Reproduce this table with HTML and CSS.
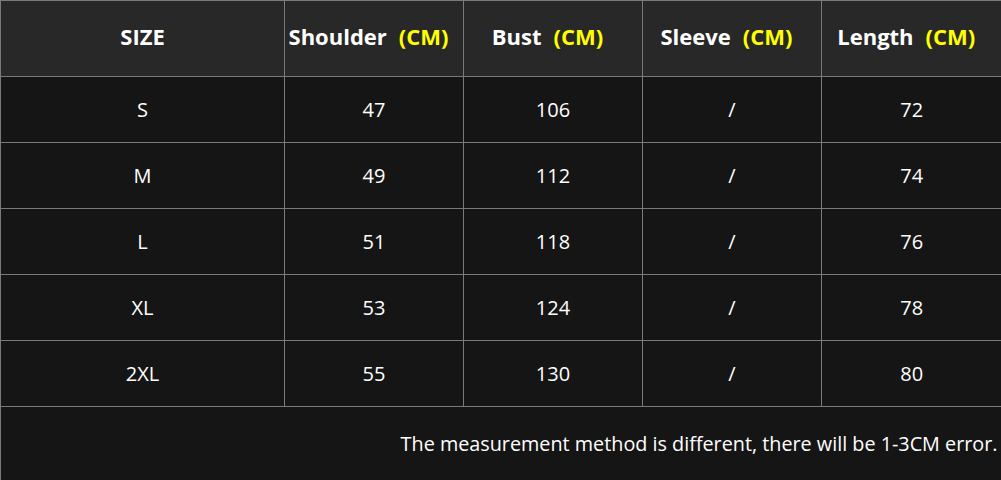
FILE: index.html
```html
<!DOCTYPE html>
<html>
<head>
<meta charset="utf-8">
<link rel="stylesheet" href="styles.css">
</head>
<body>
<table class="size-table">
  <colgroup>
    <col class="c-size"><col class="c-m"><col class="c-m"><col class="c-m"><col class="c-last">
  </colgroup>
  <thead>
    <tr class="head-row">
      <th>SIZE</th>
      <th class="with-unit">Shoulder<span class="unit">(CM)</span></th>
      <th class="with-unit">Bust<span class="unit">(CM)</span></th>
      <th class="with-unit">Sleeve<span class="unit">(CM)</span></th>
      <th class="with-unit">Length<span class="unit">(CM)</span></th>
    </tr>
  </thead>
  <tbody>
    <tr><td>S</td><td>47</td><td>106</td><td>/</td><td>72</td></tr>
    <tr><td>M</td><td>49</td><td>112</td><td>/</td><td>74</td></tr>
    <tr><td>L</td><td>51</td><td>118</td><td>/</td><td>76</td></tr>
    <tr><td>XL</td><td>53</td><td>124</td><td>/</td><td>78</td></tr>
    <tr><td>2XL</td><td>55</td><td>130</td><td>/</td><td>80</td></tr>
    <tr class="note-row"><td colspan="5">The measurement method is different, there will be 1-3CM error.</td></tr>
  </tbody>
</table>
</body>
</html>
```
FILE: styles.css
```css
html, body {
  margin: 0;
  padding: 0;
  background: #151515;
}
.size-table {
  width: 1001px;
  border-collapse: collapse;
  table-layout: fixed;
  font-family: "Open Sans", "Noto Sans", sans-serif;
  color: #ffffff;
  background: #151515;
}
.c-size { width: 284px; }
.c-m { width: 179px; }
.c-last { width: 180px; }
.size-table th,
.size-table td {
  border: 1px solid #7a7a7a;
  text-align: center;
  padding: 0;
}
.size-table th:last-child,
.size-table td:last-child {
  border-right: none;
}
.head-row th {
  background: #282828;
  height: 70px;
  font-size: 22px;
  font-weight: 700;
  line-height: 1;
  padding-bottom: 5px;
}
.head-row th.with-unit {
  padding-right: 11px;
}
.unit {
  color: #ffff00;
  margin-left: 12px;
}
tbody td {
  height: 65px;
  font-size: 20px;
  font-weight: 400;
  line-height: 1;
  padding-bottom: 3px;
}
.note-row td {
  height: 73px;
  text-align: right;
  padding-right: 4px;
  padding-bottom: 10px;
  font-size: 19.8px;
  border-bottom: none;
}
```
